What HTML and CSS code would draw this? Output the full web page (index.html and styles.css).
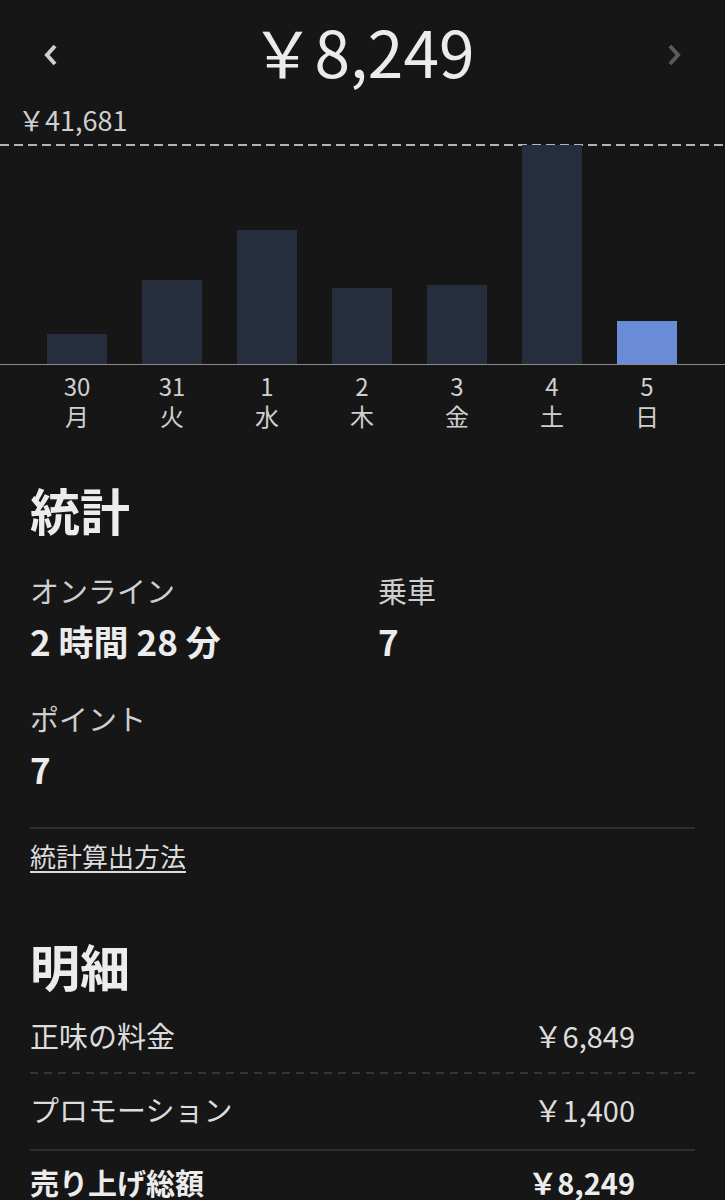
FILE: index.html
```html
<!DOCTYPE html>
<html lang="ja">
<head>
<meta charset="utf-8">
<link rel="stylesheet" href="styles.css">
</head>
<body>
<header class="top">
  <span class="nav nav-prev"><svg width="14" height="22" viewBox="0 0 14 22"><polyline points="11,2 3,11 11,20" fill="none" stroke="#cfcfcf" stroke-width="4"/></svg></span>
  <h1 class="total">￥8,249</h1>
  <span class="nav nav-next"><svg width="14" height="22" viewBox="0 0 14 22"><polyline points="3,2 11,11 3,20" fill="none" stroke="#5a5a5a" stroke-width="4"/></svg></span>
</header>

<div class="max-label">￥41,681</div>
<div class="chart">
  <div class="bar" style="height:30px"></div>
  <div class="bar" style="height:84px"></div>
  <div class="bar" style="height:134px"></div>
  <div class="bar" style="height:76px"></div>
  <div class="bar" style="height:79px"></div>
  <div class="bar" style="height:219px"></div>
  <div class="bar bar-active" style="height:43px"></div>
</div>
<div class="days">
  <div class="day"><span>30</span><span>月</span></div>
  <div class="day"><span>31</span><span>火</span></div>
  <div class="day"><span>1</span><span>水</span></div>
  <div class="day"><span>2</span><span>木</span></div>
  <div class="day"><span>3</span><span>金</span></div>
  <div class="day"><span>4</span><span>土</span></div>
  <div class="day"><span>5</span><span>日</span></div>
</div>

<section class="section">
  <h2 class="section-title">統計</h2>
  <div class="stats">
    <div class="stat">
      <div class="stat-label">オンライン</div>
      <div class="stat-value">2 時間 28 分</div>
    </div>
    <div class="stat">
      <div class="stat-label">乗車</div>
      <div class="stat-value">7</div>
    </div>
    <div class="stat">
      <div class="stat-label">ポイント</div>
      <div class="stat-value">7</div>
    </div>
  </div>
  <div class="divider"></div>
  <a class="link">統計算出方法</a>
</section>

<section class="section">
  <h2 class="section-title title-detail">明細</h2>
  <div class="row row-dashed"><span>正味の料金</span><span class="amt">￥6,849</span></div>
  <div class="row row-solid"><span>プロモーション</span><span class="amt">￥1,400</span></div>
  <div class="row row-total"><span>売り上げ総額</span><span class="amt">￥8,249</span></div>
</section>
</body>
</html>
```
FILE: styles.css
```css
html, body {
  margin: 0;
  padding: 0;
  background: #161616;
}
body {
  font-family: "Noto Sans CJK JP", "Noto Sans", sans-serif;
  color: #e8e8e8;
  width: 725px;
  height: 1200px;
  overflow: hidden;
}
.top {
  height: 100px;
  display: flex;
  align-items: center;
  justify-content: space-between;
  padding: 0 44px;
  box-sizing: border-box;
}
.nav {
  display: flex;
  width: 14px;
  margin-top: 10px;
}
.total {
  margin: 0;
  font-size: 64px;
  font-weight: 400;
  line-height: 80px;
  color: #ebebeb;
}
.max-label {
  font-size: 27px;
  line-height: 30px;
  color: #cfcfcf;
  padding-left: 18px;
  margin-top: 5px;
  margin-bottom: 9px;
}
.chart {
  height: 220px;
  background: repeating-linear-gradient(to right, #b4b4b4 0 9px, transparent 9px 14px) top left / 100% 2px no-repeat;
  border-bottom: 1px solid #8a8a8a;
  display: flex;
  align-items: flex-end;
  gap: 35px;
  padding-left: 47px;
}
.bar {
  width: 60px;
  background: #262d3c;
}
.bar-active {
  background: #6a8cd7;
}
.days {
  display: flex;
  gap: 35px;
  padding-left: 47px;
  margin-top: 6px;
}
.day {
  width: 60px;
  display: flex;
  flex-direction: column;
  align-items: center;
  font-size: 24px;
  line-height: 30px;
  color: #cfcfcf;
}
.section {
  padding: 0 30px;
}
.section-title {
  margin: 48px 0 0 0;
  font-size: 50px;
  line-height: 60px;
  font-weight: 700;
  color: #ececec;
}
.stats {
  display: grid;
  grid-template-columns: 348px 1fr;
  row-gap: 39px;
  margin-top: 33px;
}
.stat-label {
  font-size: 29px;
  line-height: 36px;
  color: #cfcfcf;
}
.stat-value {
  font-size: 35px;
  line-height: 40px;
  font-weight: 700;
  margin-top: 13px;
  color: #ececec;
}
.divider {
  height: 2px;
  background: #2e2e2e;
  margin-top: 38px;
}
.link {
  display: inline-block;
  font-size: 26px;
  line-height: 32px;
  margin-top: 11px;
  color: #dcdcdc;
  text-decoration: underline;
  text-underline-offset: 4px;
}
.title-detail {
  margin-top: 63px;
}
.row {
  display: flex;
  justify-content: space-between;
  font-size: 29px;
  line-height: 36px;
  color: #dcdcdc;
  padding-right: 60px;
}
.row-dashed {
  margin-top: 22px;
  padding-bottom: 21px;
  background: repeating-linear-gradient(to right, #353535 0 8px, transparent 8px 14px) bottom left / 100% 2px no-repeat;
}
.row-solid {
  padding-top: 17px;
  padding-bottom: 22px;
  border-bottom: 2px solid #2e2e2e;
}
.row-total {
  padding-top: 13px;
  font-weight: 700;
  color: #ececec;
}
```
